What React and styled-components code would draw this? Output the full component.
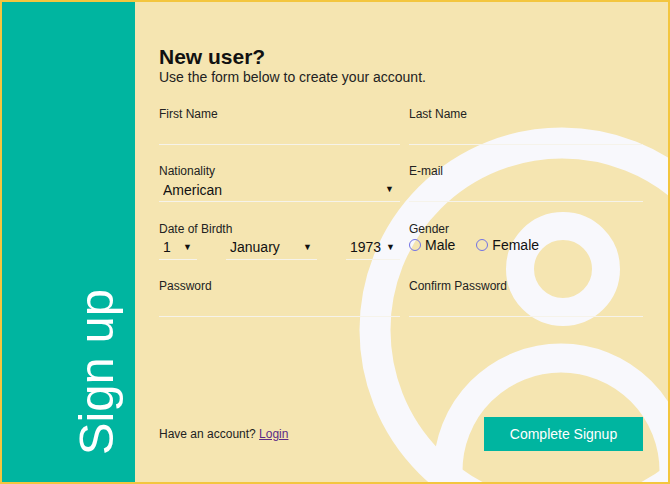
import React from 'react'
import styled, { createGlobalStyle } from 'styled-components'

const GlobalStyle = createGlobalStyle`
  html, body {
    margin: 0;
    padding: 0;
  }
  body {
    font-family: "Liberation Sans", Arial, sans-serif;
    color: #111;
  }
`

const Frame = styled.div`
  display: flex;
  width: 670px;
  height: 484px;
  box-sizing: border-box;
  border: 2px solid #f3c63f;
  background: #f5e5b1;
  overflow: hidden;
`

const Sidebar = styled.div`
  display: flex;
  justify-content: flex-end;
  align-items: flex-end;
  width: 133px;
  flex-shrink: 0;
  box-sizing: border-box;
  padding: 0 14px 27px 0;
  background: #00b5a0;
`

const SideTitle = styled.div`
  writing-mode: vertical-rl;
  transform: rotate(180deg);
  color: #fff;
  font-size: 49px;
  line-height: 49px;
  white-space: nowrap;
`

const Main = styled.div`
  position: relative;
  flex: 1;
  display: flex;
  flex-direction: column;
  padding: 43px 25px 31px 24px;
  overflow: hidden;
`

const Decoration = styled.svg`
  position: absolute;
  left: 0;
  top: 0;
  width: 533px;
  height: 480px;
  pointer-events: none;
`

const Content = styled.div`
  position: relative;
  display: flex;
  flex-direction: column;
  flex: 1;
`

const Title = styled.h1`
  margin: 0;
  font-size: 21px;
  line-height: 24px;
  font-weight: bold;
`

const Subtitle = styled.p`
  margin: 0;
  font-size: 14px;
  line-height: 16px;
  color: #222;
`

const FormGrid = styled.div`
  display: grid;
  grid-template-columns: 241px 234px;
  column-gap: 9px;
  row-gap: 19.4px;
  margin-top: 22px;
`

const Field = styled.div`
  display: flex;
  flex-direction: column;
`

const Label = styled.label`
  font-size: 12px;
  line-height: 14px;
  color: #222;
`

const TextInput = styled.input`
  height: 23px;
  box-sizing: content-box;
  padding: 0 4px;
  border: none;
  border-bottom: 1px solid #f6f3ea;
  background: transparent;
  font-family: inherit;
  font-size: 14px;
  outline: none;
`

const SelectWrap = styled.div`
  position: relative;
  width: ${p => p.$width || '100%'};
  height: 23px;
  border-bottom: 1px solid #f6f3ea;
  box-sizing: content-box;

  &::after {
    content: '▼';
    position: absolute;
    right: ${p => p.$arrowRight || '6px'};
    top: 6px;
    font-size: 9px;
    color: #111;
    pointer-events: none;
  }
`

const Select = styled.select`
  appearance: none;
  width: 100%;
  height: 23px;
  padding: 0 0 0 4px;
  border: none;
  background: transparent;
  font-family: inherit;
  font-size: 14px;
  color: #111;
  outline: none;
`

const DateRow = styled.div`
  display: flex;
  justify-content: space-between;
`

const RadioRow = styled.div`
  display: flex;
  align-items: center;
  gap: 21px;
  height: 19px;
`

const RadioLabel = styled.label`
  display: flex;
  align-items: center;
  gap: 4px;
  font-size: 14px;
  color: #111;
`

const Radio = styled.input`
  appearance: none;
  width: 12px;
  height: 12px;
  margin: 0;
  border: 1px solid #7272e4;
  border-radius: 50%;
  background: transparent;
`

const Footer = styled.div`
  display: flex;
  justify-content: space-between;
  align-items: center;
  margin-top: auto;
`

const FooterText = styled.span`
  font-size: 12px;
  color: #222;

  a {
    color: #5b2a86;
  }
`

const SubmitButton = styled.button`
  width: 159px;
  height: 34px;
  border: none;
  background: #00b5a0;
  color: #fff;
  font-family: inherit;
  font-size: 14px;
  cursor: pointer;
`

const days = Array.from({ length: 31 }, (_, i) => i + 1)
const months = ['January', 'February', 'March', 'April', 'May', 'June', 'July',
  'August', 'September', 'October', 'November', 'December']
const years = Array.from({ length: 60 }, (_, i) => 1950 + i)

export default function App() {
  return (
    <>
      <GlobalStyle />
      <Frame>
        <Sidebar>
          <SideTitle>Sign up</SideTitle>
        </Sidebar>
        <Main>
          {/* user silhouette drawn in the background */}
          <Decoration viewBox="0 0 533 480">
            <g fill="none" stroke="#f8f8fc">
              <circle cx="427" cy="328" r="187" strokeWidth="31" />
              <circle cx="428" cy="267" r="43" strokeWidth="28" />
              <circle cx="426" cy="469" r="113" strokeWidth="29" />
            </g>
          </Decoration>
          <Content>
            <Title>New user?</Title>
            <Subtitle>Use the form below to create your account.</Subtitle>
            <FormGrid>
              <Field>
                <Label>First Name</Label>
                <TextInput type="text" />
              </Field>
              <Field>
                <Label>Last Name</Label>
                <TextInput type="text" />
              </Field>
              <Field>
                <Label>Nationality</Label>
                <SelectWrap>
                  <Select defaultValue="American">
                    <option>American</option>
                    <option>British</option>
                    <option>Canadian</option>
                  </Select>
                </SelectWrap>
              </Field>
              <Field>
                <Label>E-mail</Label>
                <TextInput type="email" />
              </Field>
              <Field>
                <Label>Date of Birdth</Label>
                <DateRow>
                  <SelectWrap $width="38px" $arrowRight="5px">
                    <Select defaultValue="1">
                      {days.map(d => <option key={d}>{d}</option>)}
                    </Select>
                  </SelectWrap>
                  <SelectWrap $width="91px" $arrowRight="5px">
                    <Select defaultValue="January">
                      {months.map(m => <option key={m}>{m}</option>)}
                    </Select>
                  </SelectWrap>
                  <SelectWrap $width="54px" $arrowRight="5px">
                    <Select defaultValue="1973">
                      {years.map(y => <option key={y}>{y}</option>)}
                    </Select>
                  </SelectWrap>
                </DateRow>
              </Field>
              <Field>
                <Label>Gender</Label>
                <RadioRow>
                  <RadioLabel><Radio type="radio" name="gender" />Male</RadioLabel>
                  <RadioLabel><Radio type="radio" name="gender" />Female</RadioLabel>
                </RadioRow>
              </Field>
              <Field>
                <Label>Password</Label>
                <TextInput type="password" />
              </Field>
              <Field>
                <Label>Confirm Password</Label>
                <TextInput type="password" />
              </Field>
            </FormGrid>
            <Footer>
              <FooterText>Have an account? <a href="#">Login</a></FooterText>
              <SubmitButton>Complete Signup</SubmitButton>
            </Footer>
          </Content>
        </Main>
      </Frame>
    </>
  )
}
